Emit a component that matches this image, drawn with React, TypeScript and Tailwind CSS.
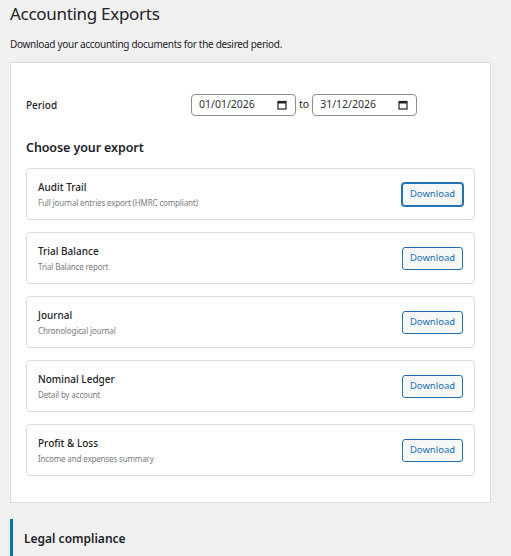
import React from 'react';

const exports_ = [
  { title: 'Audit Trail', desc: 'Full journal entries export (HMRC compliant)' },
  { title: 'Trial Balance', desc: 'Trial Balance report' },
  { title: 'Journal', desc: 'Chronological journal' },
  { title: 'Nominal Ledger', desc: 'Detail by account' },
  { title: 'Profit & Loss', desc: 'Income and expenses summary' },
];

function CalendarIcon() {
  return (
    <svg width="10" height="10" viewBox="0 0 10 10" className="shrink-0">
      <rect x="1" y="1.5" width="8" height="7.5" fill="none" stroke="#1d2327" strokeWidth="1.2" />
      <rect x="1" y="1.5" width="8" height="2" fill="#1d2327" />
    </svg>
  );
}

function DateField({ value }: { value: string }) {
  return (
    <div className="flex h-[22px] w-[105px] items-center justify-between rounded-[4px] border border-[#8c8f94] bg-white pl-[7px] pr-[8px] text-[10.5px] text-[#2c3338]">
      <span>{value}</span>
      <CalendarIcon />
    </div>
  );
}

export default function App() {
  return (
    <div className="min-h-[556px] w-[511px] bg-[#f0f0f1] pl-[10px] pr-[20px] font-['Noto_Sans',sans-serif] text-[#1d2327]">
      <h1 className="pt-[2px] text-[17px] font-normal leading-[24px] tracking-[-0.3px]">Accounting Exports</h1>
      <p className="mt-[10px] text-[10px] leading-[16px] tracking-[-0.3px] text-[#1d2327]">
        Download your accounting documents for the desired period.
      </p>

      <div className="mt-[10px] border border-[#dcdcde] bg-white px-[15px] pb-[26px] pt-[31px]">
        <div className="flex items-center">
          <span className="w-[165px] text-[10px] font-medium">Period</span>
          <DateField value="01/01/2026" />
          <span className="mx-[3px] text-[10.5px]">to</span>
          <DateField value="31/12/2026" />
        </div>

        <h2 className="mt-[22px] text-[12.5px] font-semibold leading-[20px] tracking-[-0.1px]">Choose your export</h2>

        <div className="mt-[10px] flex flex-col gap-[12px]">
          {exports_.map((item, i) => (
            <div
              key={item.title}
              className="flex h-[52px] items-center justify-between rounded-[4px] border border-[#dcdcde] bg-white pl-[11px] pr-[11px]"
            >
              <div className="flex flex-col">
                <span className="text-[10px] font-medium leading-[15px] text-[#1d2327]">{item.title}</span>
                <span className="mt-[2px] text-[8px] leading-[12px] tracking-[-0.15px] text-[#787c82]">{item.desc}</span>
              </div>
              <button
                className={`h-[23px] w-[61px] rounded-[3px] border border-[#2271b1] bg-[#f6f7f7] text-[9.5px] text-[#2271b1] ${
                  i === 0 ? 'shadow-[0_0_0_1px_#2271b1]' : ''
                }`}
              >
                Download
              </button>
            </div>
          ))}
        </div>
      </div>

      <div className="mt-[16px] flex h-[40px] items-center border-l-[3px] border-[#0073aa] pl-[11px]">
        <h2 className="text-[12px] font-semibold">Legal compliance</h2>
      </div>
    </div>
  );
}
